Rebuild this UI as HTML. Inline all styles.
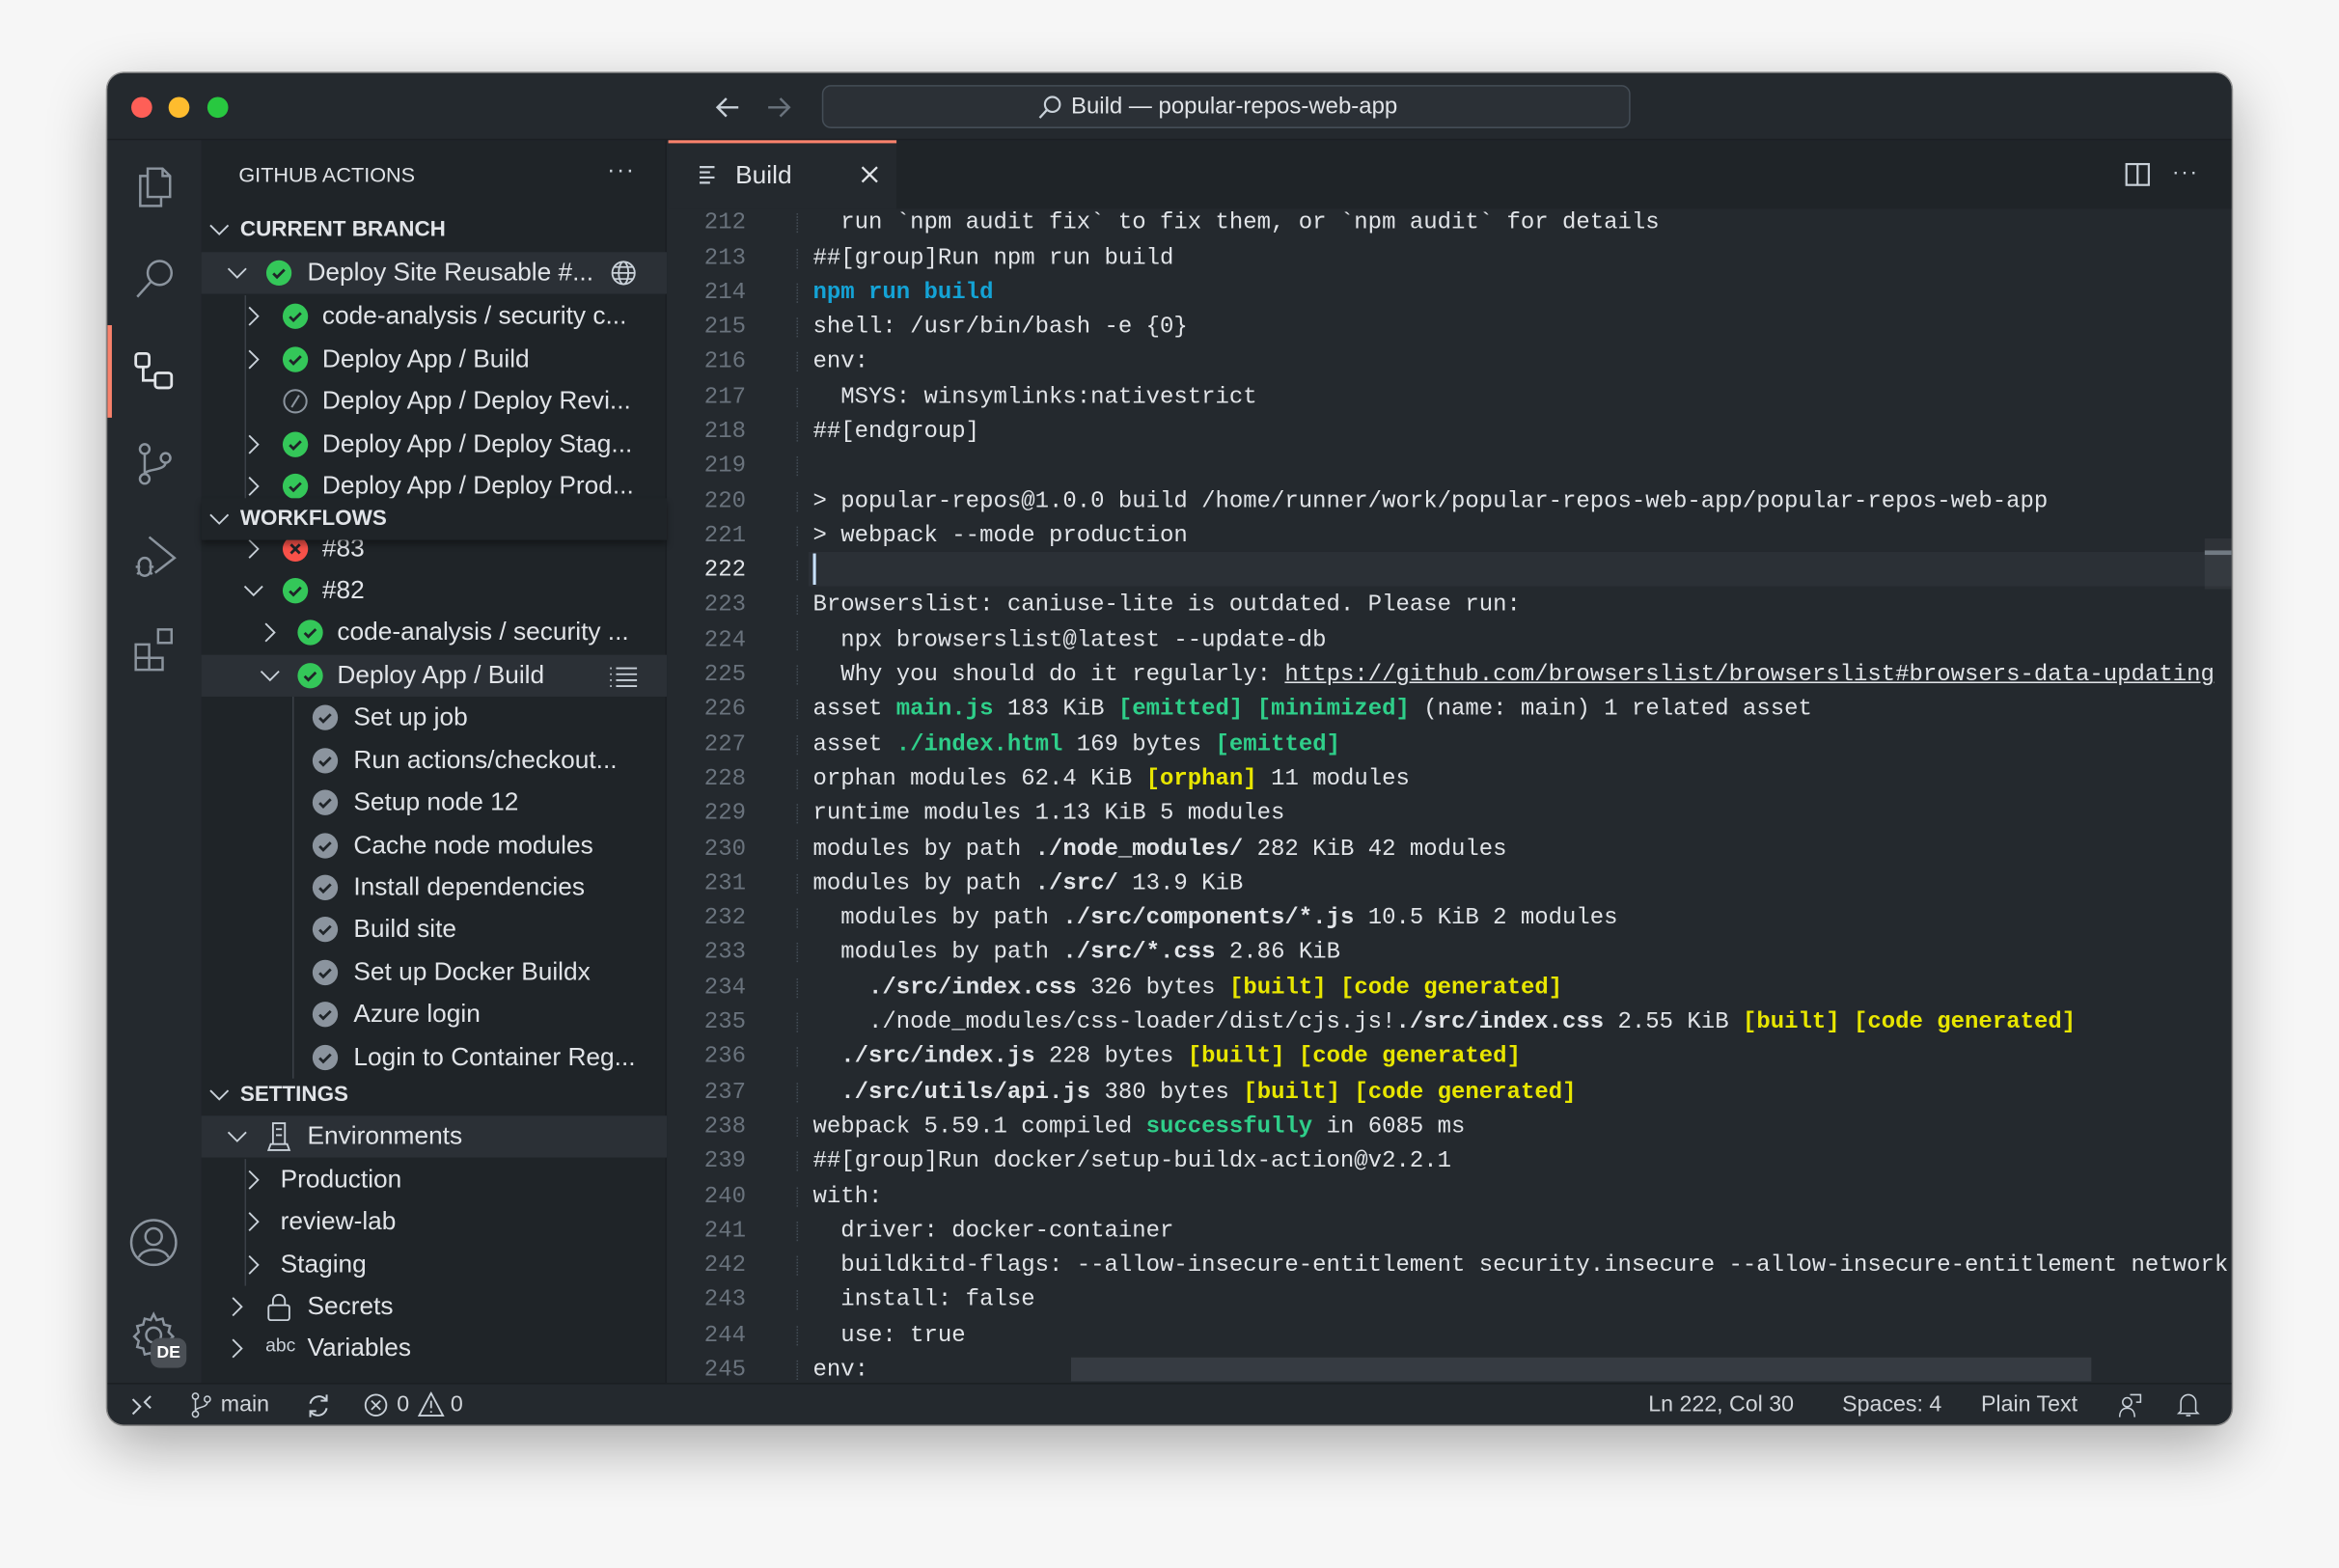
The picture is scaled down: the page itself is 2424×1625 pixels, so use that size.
<!DOCTYPE html>
<html><head><meta charset="utf-8"><style>
*{margin:0;padding:0;box-sizing:border-box}
html,body{width:2424px;height:1624px;overflow:hidden;background:#f6f6f6}
#s{position:absolute;left:0;top:0;width:1568px;height:1051px;transform:scale(1.5459);transform-origin:0 0;font-family:"Liberation Sans",sans-serif;color:#e1e4e8}
.win{position:absolute;left:72px;top:49px;width:1424px;height:906px;border-radius:11px;background:#24292e;overflow:hidden;box-shadow:0 14px 40px rgba(0,0,0,.32),0 0 0 1px rgba(0,0,0,.35)}
.a{position:absolute}
.row{position:absolute;left:0;width:312px;height:28.5px;line-height:28.5px;font-size:17px;color:#e1e4e8;white-space:nowrap}
.row svg{position:absolute}
.hdr{font-weight:bold;font-size:14.5px}
.code{position:absolute;left:0;top:87.3px;width:1048px;font-family:"Liberation Mono",monospace;font-size:15.5px;line-height:23.3px;white-space:pre;color:#e1e4e8}
.ln{position:absolute;left:0;width:52px;text-align:right;color:#6a737d}
.tx{position:absolute;left:97px}
.g{color:#2fcf8a;font-weight:bold}.y{color:#e8e600;font-weight:bold}.c{color:#14a3d6;font-weight:bold}.b{font-weight:bold}.sg{color:#2fcf8a}
.ic{stroke:#8b949e;fill:none;stroke-width:1.6}
</style></head><body><div id="s">
<div class="win">
 <div class="a" style="left:0;top:0;width:1424px;height:45px;background:#24292e;border-bottom:1px solid #1b1f23"></div>
 <div class="a" style="left:16px;top:16px;width:14px;height:14px;border-radius:7px;background:#fe5f57"></div>
 <div class="a" style="left:41px;top:16px;width:14px;height:14px;border-radius:7px;background:#febc2e"></div>
 <div class="a" style="left:67px;top:16px;width:14px;height:14px;border-radius:7px;background:#28c840"></div>
 <svg class="a" style="left:407px;top:14px" width="18" height="18" viewBox="0 0 18 18"><path d="M16 9H2M8 3L2 9l6 6" stroke="#c9d1d9" stroke-width="1.6" fill="none"/></svg>
 <svg class="a" style="left:441px;top:14px" width="18" height="18" viewBox="0 0 18 18"><path d="M2 9h14M10 3l6 6-6 6" stroke="#6a737d" stroke-width="1.6" fill="none"/></svg>
 <div class="a" style="left:479px;top:8px;width:542px;height:29px;border:1px solid #444d56;border-radius:6px;background:#2b3036"></div>
 <svg class="a" style="left:623px;top:14px" width="18" height="18" viewBox="0 0 18 18"><circle cx="10.5" cy="7" r="5" stroke="#c9d1d9" stroke-width="1.4" fill="none"/><path d="M7 10.5L2 16" stroke="#c9d1d9" stroke-width="1.5"/></svg>
 <div class="a" style="left:646px;top:14px;font-size:15.5px;color:#e1e4e8">Build — popular-repos-web-app</div>

 <div class="a" style="left:0;top:45px;width:63px;height:833px;background:#24292e"></div>
 <div class="a" style="left:0;top:169px;width:3px;height:62px;background:#f9826c"></div>
 <svg class="a" style="left:16px;top:60px" width="32" height="32" viewBox="0 0 32 32"><path class="ic" d="M11 4h10l5 5v14H11z M21 4v5h5 M11 9H6v20h14v-6"/></svg>
 <svg class="a" style="left:16px;top:122px" width="32" height="32" viewBox="0 0 32 32"><circle class="ic" cx="19" cy="12" r="8"/><path class="ic" d="M13 18L4 28"/></svg>
 <svg class="a" style="left:16px;top:184px" width="32" height="32" viewBox="0 0 32 32"><rect x="3" y="4" width="9" height="9" rx="2" stroke="#e1e4e8" stroke-width="1.8" fill="none"/><rect x="16" y="17" width="11" height="10" rx="2" stroke="#e1e4e8" stroke-width="1.8" fill="none"/><path d="M8 13v9h8" stroke="#e1e4e8" stroke-width="1.8" fill="none"/></svg>
 <svg class="a" style="left:16px;top:246px" width="32" height="32" viewBox="0 0 32 32"><circle class="ic" cx="9" cy="6" r="3.2"/><circle class="ic" cx="9" cy="26" r="3.2"/><circle class="ic" cx="23" cy="12" r="3.2"/><path class="ic" d="M9 9v14M23 15c0 6-14 4-14 8"/></svg>
 <svg class="a" style="left:16px;top:308px" width="32" height="32" viewBox="0 0 32 32"><path class="ic" d="M12 3l17 14-13 10 M5 21a4 4 0 0 1 8 0v4a4 4 0 0 1-8 0z M3 23h3M12 23h3M4 28l2-2M14 28l-2-2"/></svg>
 <svg class="a" style="left:16px;top:370px" width="32" height="32" viewBox="0 0 32 32"><path class="ic" d="M3 13h9v9H3zM3 22h9v8H3zM12 22h9v8h-9zM18 3h9v9h-9z"/></svg>
 <svg class="a" style="left:14px;top:767px" width="34" height="34" viewBox="0 0 34 34"><circle class="ic" cx="17" cy="17" r="15"/><circle class="ic" cx="17" cy="13" r="5.5"/><path class="ic" d="M7 27c3-7 17-7 20 0"/></svg>
 <svg class="a" style="left:14px;top:829px" width="34" height="34" viewBox="0 0 34 34"><path class="ic" d="M17 3l2 4 4-1 1 4 4 1-1 4 3 3-3 3 1 4-4 1-1 4-4-1-2 4-2-4-4 1-1-4-4-1 1-4-3-3 3-3-1-4 4-1 1-4 4 1z"/><circle class="ic" cx="17" cy="17" r="5"/></svg>
 <div class="a" style="left:29px;top:848px;width:24px;height:20px;border-radius:6px;background:#4a4f55;color:#fff;font-size:11.5px;font-weight:bold;text-align:center;line-height:20px">DE</div>

 <div class="a" style="left:63px;top:45px;width:312px;height:833px;background:#1f2428;border-right:1px solid #1b1f23">
  <div class="a" style="left:25px;top:15px;font-size:14px;color:#e1e4e8">GITHUB ACTIONS</div>
  <div class="a" style="left:272px;top:12px;font-size:16px;letter-spacing:1px;color:#c9d1d9">···</div>
  <div style="position:absolute;left:0;top:1px;width:312px;height:833px" id="rows"></div>
 </div>

 <div class="a" style="left:376px;top:45px;width:1048px;height:46px;background:#1f2428"></div>
 <div class="a" style="left:376px;top:45px;width:153px;height:46px;background:#24292e;border-top:2px solid #f9826c"></div>
 <svg class="a" style="left:396px;top:61px" width="14" height="14" viewBox="0 0 14 14"><path d="M1 2h10M1 5.5h7M1 9h10M1 12.5h7" stroke="#c9d1d9" stroke-width="1.4"/></svg>
 <div class="a" style="left:421px;top:59px;font-size:17px;color:#e1e4e8">Build</div>
 <svg class="a" style="left:504px;top:61px" width="14" height="14" viewBox="0 0 14 14"><path d="M2 2l10 10M12 2L2 12" stroke="#e1e4e8" stroke-width="1.5"/></svg>
 <svg class="a" style="left:1352px;top:59px" width="18" height="18" viewBox="0 0 18 18"><rect x="1.5" y="2" width="15" height="14" stroke="#c9d1d9" stroke-width="1.4" fill="none"/><path d="M9 2v14" stroke="#c9d1d9" stroke-width="1.4"/></svg>
 <div class="a" style="left:1384px;top:58px;font-size:15px;letter-spacing:1px;color:#c9d1d9">···</div>

 <div class="a" style="left:376px;top:91px;width:1048px;height:787px;overflow:hidden">
  <div class="a" style="left:94px;top:230px;width:954px;height:23.3px;background:#2b3036"></div>
  <div class="a" style="left:97px;top:231px;width:2px;height:21px;background:#c8e1ff"></div>
  <div class="a" style="left:1030px;top:229px;width:18px;height:3px;background:#6a737d"></div>
  <div class="a" style="left:1030px;top:221px;width:18px;height:34px;background:rgba(255,255,255,.05)"></div>
  <div class="a" style="left:270px;top:770px;width:684px;height:16px;background:#363b42"></div>
  <div class="code" id="code" style="top:-1.8px"></div>
 </div>

 <div class="a" style="left:0;top:878px;width:1424px;height:28px;background:#24292e;border-top:1px solid #1b1f23;font-size:15px;color:#d1d5da">
  <svg class="a" style="left:16px;top:7px" width="14" height="14" viewBox="0 0 14 14"><path d="M1 13l5-5-5-5M13 1L9 5l4 4" stroke="#c9d1d9" stroke-width="1.3" fill="none"/></svg>
  <svg class="a" style="left:56px;top:5px" width="14" height="18" viewBox="0 0 14 18"><circle cx="3" cy="3" r="2" stroke="#c9d1d9" fill="none"/><circle cx="3" cy="15" r="2" stroke="#c9d1d9" fill="none"/><circle cx="11" cy="5" r="2" stroke="#c9d1d9" fill="none"/><path d="M3 5v8M11 7c0 4-8 3-8 6" stroke="#c9d1d9" fill="none"/></svg>
  <div class="a" style="left:76px;top:5px">main</div>
  <svg class="a" style="left:133px;top:6px" width="17" height="17" viewBox="0 0 17 17"><path d="M3 7a6 6 0 0 1 11-2M14 10a6 6 0 0 1-11 2M14 1v4h-4M3 16v-4h4" stroke="#c9d1d9" stroke-width="1.3" fill="none"/></svg>
  <svg class="a" style="left:172px;top:6px" width="16" height="16" viewBox="0 0 16 16"><circle cx="8" cy="8" r="7" stroke="#c9d1d9" stroke-width="1.2" fill="none"/><path d="M5 5l6 6M11 5l-6 6" stroke="#c9d1d9" stroke-width="1.2"/></svg>
  <div class="a" style="left:194px;top:5px">0</div>
  <svg class="a" style="left:208px;top:5px" width="18" height="17" viewBox="0 0 18 17"><path d="M9 1L1 16h16z M9 6v5M9 13v1" stroke="#c9d1d9" stroke-width="1.2" fill="none"/></svg>
  <div class="a" style="left:230px;top:5px">0</div>
  <div class="a" style="left:1033px;top:5px">Ln 222, Col 30</div>
  <div class="a" style="left:1163px;top:5px">Spaces: 4</div>
  <div class="a" style="left:1256px;top:5px">Plain Text</div>
  <svg class="a" style="left:1347px;top:5px" width="18" height="18" viewBox="0 0 18 18"><circle cx="7" cy="7" r="3" stroke="#c9d1d9" fill="none"/><path d="M2 17c0-4 2-6 5-6s5 2 5 6M9 2h7v5h-3" stroke="#c9d1d9" fill="none"/></svg>
  <svg class="a" style="left:1387px;top:5px" width="16" height="18" viewBox="0 0 16 18"><path d="M3 13V7a5 5 0 0 1 10 0v6l1.5 1.5h-13zM6.5 16h3" stroke="#c9d1d9" fill="none"/></svg>
 </div>
</div>
</div>
<script>
var ok='<svg width="18" height="18" viewBox="0 0 18 18" style="top:5px;left:LEFTpx"><circle cx="9" cy="9" r="8.5" fill="#34c759"/><path d="M5.2 9.3l2.5 2.5 5-5" stroke="#1f2428" stroke-width="1.8" fill="none"/></svg>';
var step='<svg width="18" height="18" viewBox="0 0 18 18" style="top:5px;left:LEFTpx"><circle cx="9" cy="9" r="8.5" fill="#8b949e"/><path d="M5.2 9.3l2.5 2.5 5-5" stroke="#1f2428" stroke-width="1.8" fill="none"/></svg>';
var fail='<svg width="18" height="18" viewBox="0 0 18 18" style="top:5px;left:LEFTpx"><circle cx="9" cy="9" r="8.5" fill="#f85149"/><path d="M6 6l6 6M12 6l-6 6" stroke="#1f2428" stroke-width="1.8"/></svg>';
var skip='<svg width="18" height="18" viewBox="0 0 18 18" style="top:5px;left:LEFTpx"><circle cx="9" cy="9" r="7.5" stroke="#8b949e" stroke-width="1.3" fill="none"/><path d="M11.5 5L6.5 13" stroke="#8b949e" stroke-width="1.3"/></svg>';
var dn='<svg width="14" height="14" viewBox="0 0 14 14" style="top:7px;left:LEFTpx"><path d="M1 4l6 6 6-6" stroke="#c9d1d9" stroke-width="1.2" fill="none"/></svg>';
var rt='<svg width="14" height="14" viewBox="0 0 14 14" style="top:7px;left:LEFTpx"><path d="M4 1l6 6-6 6" stroke="#c9d1d9" stroke-width="1.2" fill="none"/></svg>';
var R=[
 [153,dn,147,null,0,'CURRENT BRANCH',161,'hdr'],
 [182,dn,159,ok,187,'Deploy Site Reusable #...',206,'sel',1],
 [211,rt,170,ok,198,'code-analysis / security c...',216],
 [240,rt,170,ok,198,'Deploy App / Build',216],
 [268,null,0,skip,198,'Deploy App / Deploy Revi...',216],
 [297,rt,170,ok,198,'Deploy App / Deploy Stag...',216],
 [325,rt,170,ok,198,'Deploy App / Deploy Prod...',216],
 [367,rt,170,fail,198,'#83',216],
 [395,dn,170,ok,198,'#82',216],
 [423,rt,181,ok,208,'code-analysis / security ...',226],
 [452,dn,181,ok,208,'Deploy App / Build',226,'sel',2],
 [480,null,0,step,218,'Set up job',237],
 [509,null,0,step,218,'Run actions/checkout...',237],
 [537,null,0,step,218,'Setup node 12',237],
 [566,null,0,step,218,'Cache node modules',237],
 [594,null,0,step,218,'Install dependencies',237],
 [622,null,0,step,218,'Build site',237],
 [651,null,0,step,218,'Set up Docker Buildx',237],
 [679,null,0,step,218,'Azure login',237],
 [708,null,0,step,218,'Login to Container Reg...',237],
 [733,dn,147,null,0,'SETTINGS',161,'hdr'],
 [761,dn,159,'ENV',187,'Environments',206,'sel'],
 [790,rt,170,null,0,'Production',188],
 [818,rt,170,null,0,'review-lab',188],
 [847,rt,170,null,0,'Staging',188],
 [875,rt,159,'LOCK',187,'Secrets',206],
 [903,rt,159,'ABC',187,'Variables',206]
];
var h='';var off=135;var topOff=94;
h+='<div style="position:absolute;left:'+(164-off)+'px;top:'+(197-topOff)+'px;width:1px;height:142px;background:#3a4047"></div>';
h+='<div style="position:absolute;left:'+(196-off)+'px;top:'+(466-topOff)+'px;width:1px;height:256px;background:#3a4047"></div>';
h+='<div style="position:absolute;left:'+(164-off)+'px;top:'+(776-topOff)+'px;width:1px;height:85px;background:#3a4047"></div>';
R.forEach(function(r){
 var y=r[0]-14.25-topOff;
 var bg=r[7]=='sel'?'background:#2b3036;':'';
 var s='<div class="row '+(r[7]=='hdr'?'hdr':'')+'" style="top:'+y+'px;'+bg+'">';
 if(r[1])s+=r[1].replace('LEFT',r[2]-off-7);
 if(r[3]){var ic=r[3];
  if(ic=='ENV')s+='<svg width="18" height="20" viewBox="0 0 18 20" style="top:4px;left:'+(r[4]-off-9)+'px"><path d="M5 1h8v14H5zM7 5h4M7 9h4M2 19l1.5-4h11l1.5 4z" stroke="#c9d1d9" stroke-width="1.2" fill="none"/></svg>';
  else if(ic=='LOCK')s+='<svg width="18" height="20" viewBox="0 0 18 20" style="top:4px;left:'+(r[4]-off-9)+'px"><rect x="2" y="9" width="14" height="10" rx="1.5" stroke="#c9d1d9" stroke-width="1.2" fill="none"/><path d="M5 9V6a4 4 0 0 1 8 0v3" stroke="#c9d1d9" stroke-width="1.2" fill="none"/></svg>';
  else if(ic=='ABC')s+='<span style="position:absolute;left:'+(r[4]-off-9)+'px;top:-2px;font-size:12.5px;color:#c9d1d9">abc</span>';
  else s+=ic.replace('LEFT',r[4]-off-9);}
 var tc=r[7]=='hdr'?'font-size:14.5px;':'';
 s+='<span style="position:absolute;left:'+(r[6]-off)+'px;'+tc+'">'+r[5]+'</span>';
 if(r[8]==1)s+='<svg width="18" height="18" viewBox="0 0 18 18" style="top:5px;left:'+(418-off-9)+'px"><circle cx="9" cy="9" r="7.5" stroke="#c9d1d9" stroke-width="1.2" fill="none"/><ellipse cx="9" cy="9" rx="3.2" ry="7.5" stroke="#c9d1d9" stroke-width="1.2" fill="none"/><path d="M1.5 9h15M3 5h12M3 13h12" stroke="#c9d1d9" stroke-width="1.1"/></svg>';
 if(r[8]==2)s+='<svg width="20" height="16" viewBox="0 0 20 16" style="top:7px;left:'+(418-off-10)+'px"><path d="M1 2h1M5 2h14M1 6h1M5 6h14M1 10h1M5 10h14M1 14h1M5 14h14" stroke="#c9d1d9" stroke-width="1.2"/></svg>';
 s+='</div>';h+=s;
});
h+='<div class="row hdr" style="top:'+(347-14.25-topOff)+'px;background:#1f2428;box-shadow:0 3px 4px rgba(0,0,0,.35)">'+dn.replace('LEFT',147-off-7)+'<span style="position:absolute;left:'+(161-off)+'px;font-size:14.5px">WORKFLOWS</span></div>';
document.getElementById('rows').innerHTML=h;

var L=[
'  run `npm audit fix` to fix them, or `npm audit` for details',
'##[group]Run npm run build',
'<span class="c">npm run build</span>',
'shell: /usr/bin/bash -e {0}',
'env:',
'  MSYS: winsymlinks:nativestrict',
'##[endgroup]',
'',
'> popular-repos@1.0.0 build /home/runner/work/popular-repos-web-app/popular-repos-web-app',
'> webpack --mode production',
'',
'Browserslist: caniuse-lite is outdated. Please run:',
'  npx browserslist@latest --update-db',
'  Why you should do it regularly: <span style="text-decoration:underline">https://github.com/browserslist/browserslist#browsers-data-updating</span>',
'asset <span class="g">main.js</span> 183 KiB <span class="g">[emitted]</span> <span class="g">[minimized]</span> (name: main) 1 related asset',
'asset <span class="g">./index.html</span> 169 bytes <span class="g">[emitted]</span>',
'orphan modules 62.4 KiB <span class="y">[orphan]</span> 11 modules',
'runtime modules 1.13 KiB 5 modules',
'modules by path <span class="b">./node_modules/</span> 282 KiB 42 modules',
'modules by path <span class="b">./src/</span> 13.9 KiB',
'  modules by path <span class="b">./src/components/*.js</span> 10.5 KiB 2 modules',
'  modules by path <span class="b">./src/*.css</span> 2.86 KiB',
'    <span class="b">./src/index.css</span> 326 bytes <span class="y">[built]</span> <span class="y">[code generated]</span>',
'    ./node_modules/css-loader/dist/cjs.js!<span class="b">./src/index.css</span> 2.55 KiB <span class="y">[built]</span> <span class="y">[code generated]</span>',
'  <span class="b">./src/index.js</span> 228 bytes <span class="y">[built]</span> <span class="y">[code generated]</span>',
'  <span class="b">./src/utils/api.js</span> 380 bytes <span class="y">[built]</span> <span class="y">[code generated]</span>',
'webpack 5.59.1 compiled <span class="sg b">successfully</span> in 6085 ms',
'##[group]Run docker/setup-buildx-action@v2.2.1',
'with:',
'  driver: docker-container',
'  buildkitd-flags: --allow-insecure-entitlement security.insecure --allow-insecure-entitlement network.host',
'  install: false',
'  use: true',
'env:'
];
var c='';
L.forEach(function(t,i){var n=212+i;
 c+='<div style="position:relative;height:23.3px"><span class="ln" style="'+(n==222?'color:#e1e4e8':'')+'">'+n+'</span><span style="position:absolute;left:86px;top:5px;width:1px;height:13px;border-left:1px dotted #444d56"></span><span class="tx">'+t+'</span></div>';});
document.getElementById('code').innerHTML=c;
</script>
</body></html>
